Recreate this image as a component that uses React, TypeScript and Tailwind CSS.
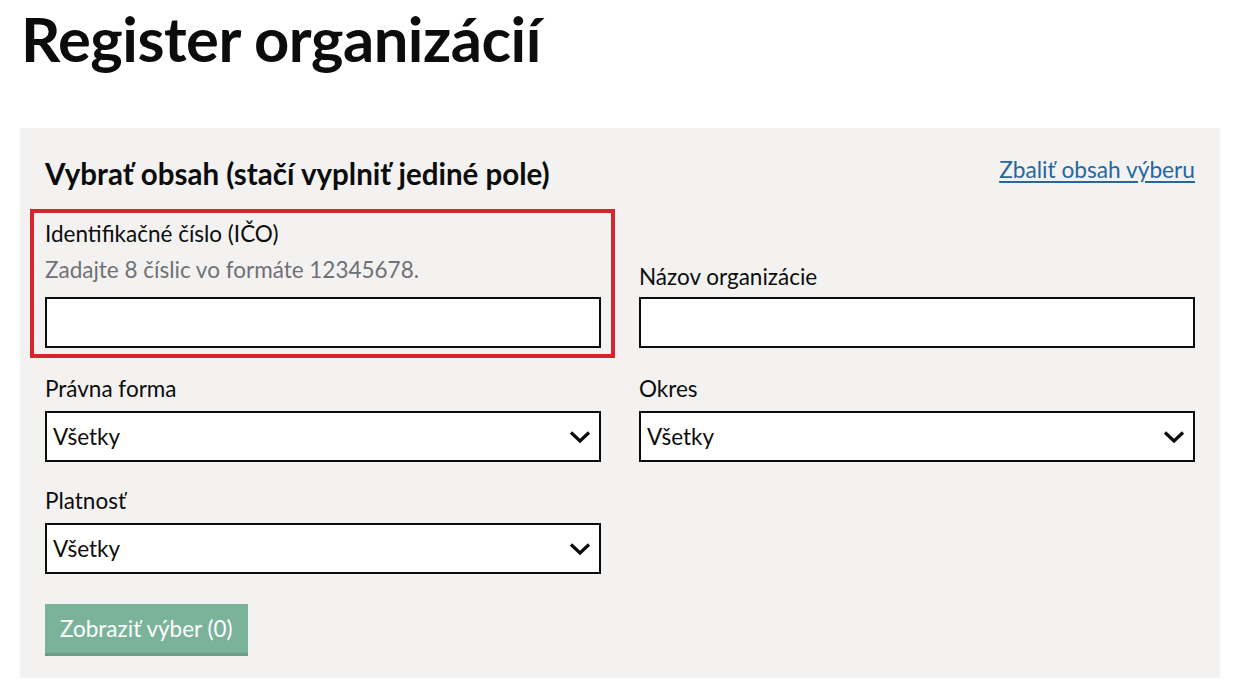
const font = { fontFamily: 'Lato, "Noto Sans", sans-serif' }

function Chevron() {
    return (
        <svg width="22" height="14" viewBox="0 0 22 14" className="shrink-0">
            <path d="M2 2.5 L11 11 L20 2.5" fill="none" stroke="#0b0c0c" strokeWidth="3.2" />
        </svg>
    )
}

function Select({ label }: { label: string }) {
    return (
        <div>
            <label className="mb-[7px] block text-[22.5px] leading-[30px] text-[#0b0c0c]">{label}</label>
            <div className="flex h-[51px] items-center justify-between border-2 border-[#0b0c0c] bg-white pl-[6px] pr-[8px]">
                <span className="text-[22.5px] text-[#0b0c0c]">Všetky</span>
                <Chevron />
            </div>
        </div>
    )
}

export default function App() {
    return (
        <div className="min-h-[687px] w-[1237px] bg-white" style={font}>
            <h1 className="pl-[21px] pt-[3px] text-[61.5px] font-bold leading-[70px] tracking-[-0.5px] text-[#0b0c0c]">
                Register organizácií
            </h1>

            <div className="ml-[20px] mt-[55px] w-[1200px] bg-[#f3f2f1] px-[25px] pb-[25px] pt-[26px]">
                <div className="flex items-center justify-between">
                    <h2 className="text-[29.5px] font-bold leading-[40px] text-[#0b0c0c]">
                        Vybrať obsah (stačí vyplniť jediné pole)
                    </h2>
                    <a href="#" className="-mt-[8px] text-[22.7px] text-[#26679e] underline underline-offset-[3px]">
                        Zbaliť obsah výberu
                    </a>
                </div>

                <div className="mt-[25px] grid grid-cols-[556px_556px] gap-x-[38px] gap-y-[24px]">
                    <div className="relative mb-[2px] self-end">
                        <div className="absolute -left-[15px] -right-[14px] -top-[10px] -bottom-[10px] border-4 border-[#d5262e]" />
                        <label className="block text-[22.5px] leading-[30px] text-[#0b0c0c]">Identifikačné číslo (IČO)</label>
                        <p className="mt-[6px] text-[22.5px] leading-[30px] text-[#6f7175]">
                            Zadajte 8 číslic vo formáte 12345678.
                        </p>
                        <input className="mt-[12px] block h-[51px] w-full border-2 border-[#0b0c0c] bg-white" />
                    </div>
                    <div className="mb-[2px] self-end">
                        <label className="mb-[5px] block text-[22.5px] leading-[30px] text-[#0b0c0c]">Názov organizácie</label>
                        <input className="block h-[51px] w-full border-2 border-[#0b0c0c] bg-white" />
                    </div>

                    <Select label="Právna forma" />
                    <Select label="Okres" />
                    <Select label="Platnosť" />
                </div>

                <button className="mt-[30px] h-[49px] bg-[#7ab39a] px-[15px] text-[22.5px] text-white shadow-[0_3px_0_#6e9c88]">
                    Zobraziť výber (0)
                </button>
            </div>
        </div>
    )
}
